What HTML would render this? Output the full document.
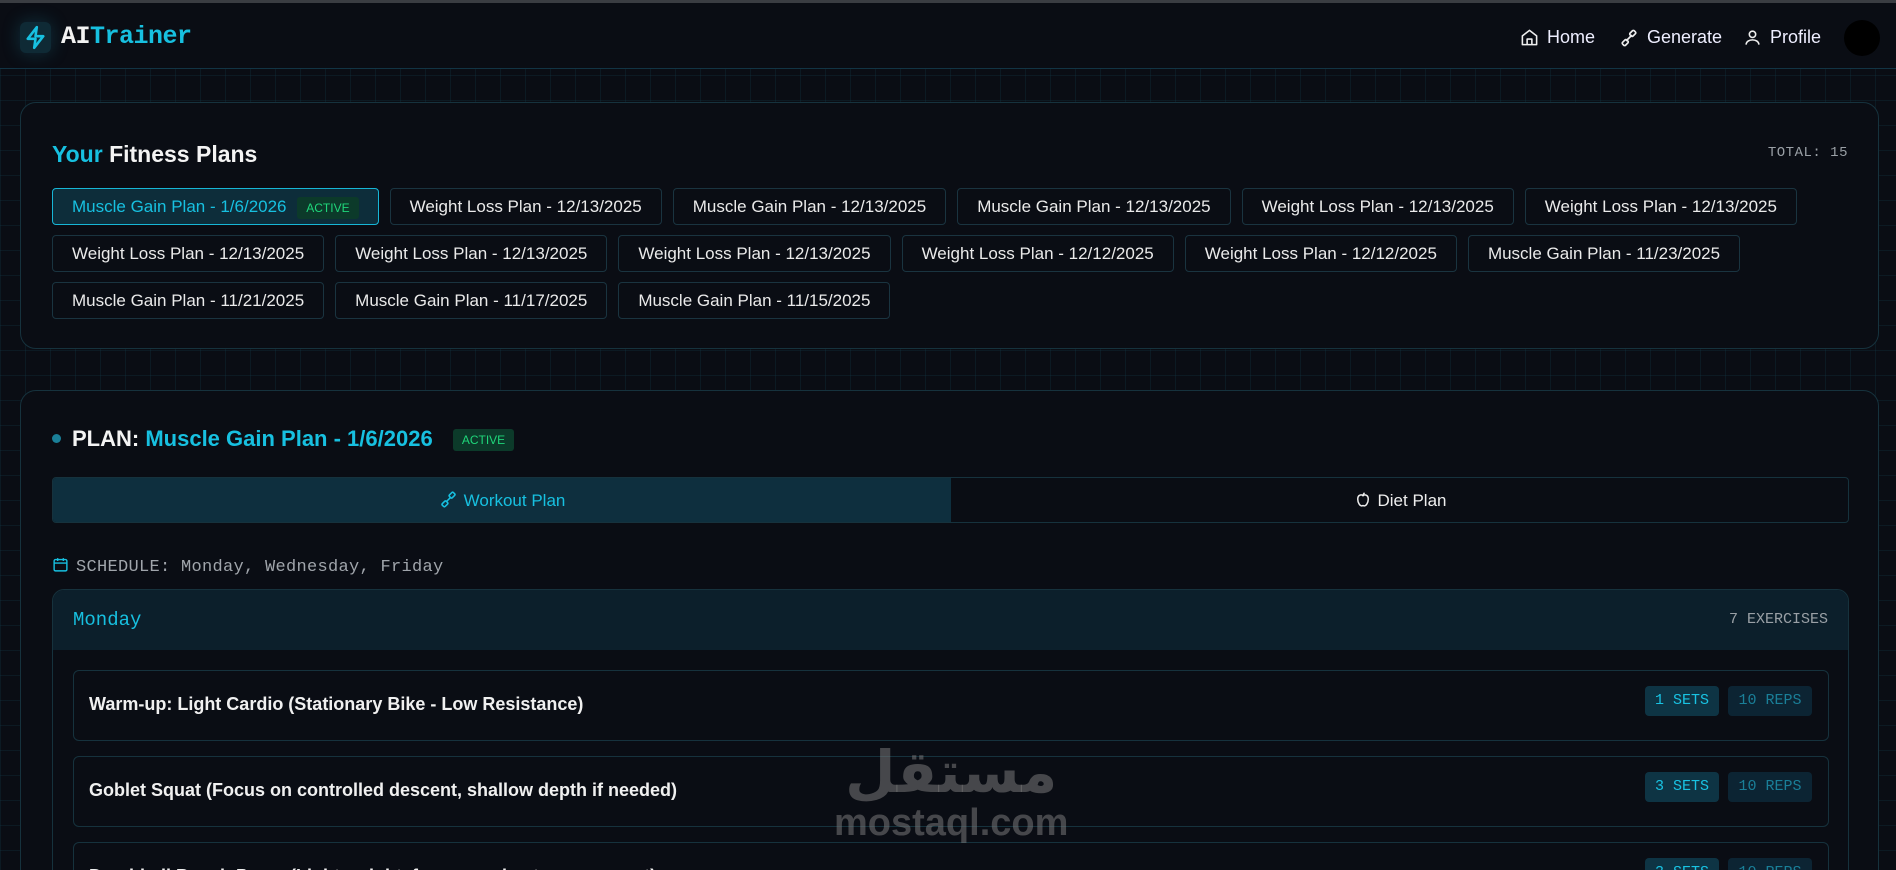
<!DOCTYPE html>
<html><head><meta charset="utf-8"><style>
*{box-sizing:border-box;margin:0;padding:0}
html,body{width:1896px;height:870px;overflow:hidden}
body{background-color:#0a0d14;background-image:linear-gradient(rgba(20,60,75,.28) 1px,transparent 1px),linear-gradient(90deg,rgba(20,60,75,.28) 1px,transparent 1px);background-size:25px 25px;font-family:"Liberation Sans",sans-serif;color:#e8ecef;position:relative}
.topline{position:absolute;left:0;top:0;width:1896px;height:3px;background:#3a3d42}
.nav{position:absolute;left:0;top:3px;width:1896px;height:66px;background:#0a0d14;border-bottom:1px solid #123444}
.logo{position:absolute;left:20px;top:19px;width:31px;height:31px;border-radius:6px;background:#0f2a35;box-shadow:0 0 18px rgba(30,160,190,.25)}
.brand{position:absolute;left:61px;top:19px;font-family:"Liberation Mono",monospace;font-weight:bold;font-size:25px;color:#f2f2f2;letter-spacing:-.5px}
.brand span{color:#17c0e0}
.nl{position:absolute;top:24px;font-size:18px;color:#eef;display:flex;align-items:center;gap:8px}
.avatar{position:absolute;left:1844px;top:17px;width:36px;height:36px;border-radius:50%;background:#000}
.card{position:absolute;left:20px;width:1859px;border:1px solid #16323d;border-radius:16px;background:#0a0d14}
.h1{position:absolute;left:31px;top:38px;font-size:23px;font-weight:bold;color:#f4f4f4}
.total{position:absolute;right:30px;top:42px;font-family:"Liberation Mono",monospace;font-size:14px;color:#9aa0a6;letter-spacing:.5px}
.chips{position:absolute;left:31px;top:85px;width:1800px;display:flex;flex-wrap:wrap;gap:10px 11px}
.chip{height:37px;border:1px solid #1a3440;border-radius:4px;padding:0 19px;font-size:17px;line-height:35px;color:#eaeaea;white-space:nowrap}
.chip.act{border-color:#17b6d6;background:#0d2d3a;color:#17c0e0}
.badge{display:inline-block;background:#0c3a2a;color:#1fd67a;font-size:12px;padding:0 9px;line-height:22px;border-radius:3px;vertical-align:middle;margin-left:6px}
.mono{font-family:"Liberation Mono",monospace}
.ex{position:absolute;left:20px;width:1756px;height:71px;border:1px solid #16323d;border-radius:6px}
.ex .t{position:absolute;left:15px;top:23px;font-size:18px;font-weight:bold;color:#f0f0f0}
.sets{position:absolute;left:1571px;top:15px;width:74px;height:30px;background:#0e3444;border-radius:4px;color:#19c3e3;font-family:"Liberation Mono",monospace;font-size:15px;line-height:30px;text-align:center}
.reps{position:absolute;left:1654px;top:15px;width:84px;height:30px;background:#0c2433;border-radius:4px;color:#1a7f98;font-family:"Liberation Mono",monospace;font-size:15px;line-height:30px;text-align:center}
.wm{position:absolute;left:834px;top:742px;color:rgba(120,120,120,.55);text-align:center;font-weight:bold}
</style></head><body>
<div class="topline"></div>
<div class="nav">
  <div class="logo"><svg width="31" height="31" viewBox="0 0 24 24" fill="none" stroke="#17c0e0" stroke-width="2" stroke-linejoin="round"><path d="M13 4 6 13h6l-1 7 7-9h-6z"/></svg></div>
  <div class="brand">AI<span>Trainer</span></div>
  <div class="nl" style="left:1520px"><svg width="19" height="19" viewBox="0 0 24 24" fill="none" stroke="#eee" stroke-width="2" stroke-linejoin="round"><path d="M3 10 12 3l9 7v11H3z"/><path d="M9 21v-7h6v7"/></svg>Home</div>
  <div class="nl" style="left:1619px"><svg width="20" height="20" viewBox="0 0 24 24" fill="none" stroke="#eee" stroke-width="2" stroke-linecap="round"><path d="M9 15l6-6"/><rect x="14" y="3" width="5" height="7" rx="1.5" transform="rotate(45 16.5 6.5)"/><rect x="5" y="14" width="5" height="7" rx="1.5" transform="rotate(45 7.5 17.5)"/></svg>Generate</div>
  <div class="nl" style="left:1743px"><svg width="19" height="19" viewBox="0 0 24 24" fill="none" stroke="#eee" stroke-width="2"><circle cx="12" cy="8" r="4"/><path d="M4 21c0-4 4-6 8-6s8 2 8 6"/></svg>Profile</div>
  <div class="avatar"></div>
</div>

<div class="card" style="top:102px;height:247px">
  <div class="h1"><span style="color:#17c0e0">Your</span> Fitness Plans</div>
  <div class="total">TOTAL: 15</div>
  <div class="chips">
    <div class="chip act">Muscle Gain Plan - 1/6/2026 <span class="badge">ACTIVE</span></div>
    <div class="chip">Weight Loss Plan - 12/13/2025</div>
    <div class="chip">Muscle Gain Plan - 12/13/2025</div>
    <div class="chip">Muscle Gain Plan - 12/13/2025</div>
    <div class="chip">Weight Loss Plan - 12/13/2025</div>
    <div class="chip">Weight Loss Plan - 12/13/2025</div>
    <div class="chip">Weight Loss Plan - 12/13/2025</div>
    <div class="chip">Weight Loss Plan - 12/13/2025</div>
    <div class="chip">Weight Loss Plan - 12/13/2025</div>
    <div class="chip">Weight Loss Plan - 12/12/2025</div>
    <div class="chip">Weight Loss Plan - 12/12/2025</div>
    <div class="chip">Muscle Gain Plan - 11/23/2025</div>
    <div class="chip">Muscle Gain Plan - 11/21/2025</div>
    <div class="chip">Muscle Gain Plan - 11/17/2025</div>
    <div class="chip">Muscle Gain Plan - 11/15/2025</div>
  </div>
</div>

<div class="card" style="top:390px;height:500px">
  <div style="position:absolute;left:31px;top:43px;width:9px;height:9px;border-radius:50%;background:#1a7f98"></div>
  <div style="position:absolute;left:51px;top:35px;font-size:22px;font-weight:bold;color:#f4f4f4">PLAN: <span style="color:#17c0e0">Muscle Gain Plan - 1/6/2026</span> <span class="badge" style="font-weight:normal;margin-left:14px">ACTIVE</span></div>
  <div style="position:absolute;left:31px;top:86px;width:1797px;height:46px;border:1px solid #16323d;border-radius:4px;overflow:hidden">
    <div style="position:absolute;left:0;top:0;width:898px;height:46px;background:#0e2f3e"></div>
    <div style="position:absolute;left:0;top:12px;width:898px;text-align:center;font-size:17px;color:#17c0e0"><svg width="19" height="19" viewBox="0 0 24 24" fill="none" stroke="#17c0e0" stroke-width="2" style="vertical-align:-3px;margin-right:6px"><path d="M9 15l6-6"/><rect x="14" y="3" width="5" height="7" rx="1.5" transform="rotate(45 16.5 6.5)"/><rect x="5" y="14" width="5" height="7" rx="1.5" transform="rotate(45 7.5 17.5)"/></svg>Workout Plan</div>
    <div style="position:absolute;left:898px;top:12px;width:898px;text-align:center;font-size:17px;color:#eee"><svg width="18" height="19" viewBox="0 0 24 24" fill="none" stroke="#eee" stroke-width="2" style="vertical-align:-3px;margin-right:6px"><path d="M12 7c-2-2-7-1.5-7 4.5 0 5 3 9 5 9 1 0 1.5-.5 2-.5s1 .5 2 .5c2 0 5-4 5-9 0-6-5-6.5-7-4.5z"/><path d="M12 7c0-2 1-3 2-4"/></svg>Diet Plan</div>
  </div>
  <div class="mono" style="position:absolute;left:31px;top:164px;font-size:17px;letter-spacing:.3px;color:#a0a5ab"><svg width="17" height="19" viewBox="0 0 24 24" fill="none" stroke="#17c0e0" stroke-width="2" style="vertical-align:-3px;margin-right:7px"><rect x="3" y="5" width="18" height="16" rx="2"/><path d="M3 10h18M8 3v4M16 3v4"/></svg>SCHEDULE: Monday, Wednesday, Friday</div>
  <div style="position:absolute;left:31px;top:198px;width:1797px;height:400px;border:1px solid #16323d;border-radius:12px;overflow:hidden">
    <div style="position:absolute;left:0;top:0;width:100%;height:60px;background:#0c1f2b"></div>
    <div class="mono" style="position:absolute;left:20px;top:19px;font-size:19px;color:#17c0e0">Monday</div>
    <div class="mono" style="position:absolute;right:20px;top:21px;font-size:15px;color:#9aa0a6">7 EXERCISES</div>
    <div class="ex" style="top:80px"><div class="t">Warm-up: Light Cardio (Stationary Bike - Low Resistance)</div><div class="sets">1 SETS</div><div class="reps">10 REPS</div></div>
    <div class="ex" style="top:166px"><div class="t">Goblet Squat (Focus on controlled descent, shallow depth if needed)</div><div class="sets">3 SETS</div><div class="reps">10 REPS</div></div>
    <div class="ex" style="top:252px"><div class="t">Dumbbell Bench Press (Light weight, focus on chest engagement)</div><div class="sets">3 SETS</div><div class="reps">10 REPS</div></div>
  </div>
</div>
<div class="wm"><div style="font-family:'DejaVu Sans',sans-serif;font-size:58px;line-height:60px">مستقل</div><div style="font-family:'Liberation Sans',sans-serif;font-size:38px;line-height:42px">mostaql.com</div></div>
</body></html>
